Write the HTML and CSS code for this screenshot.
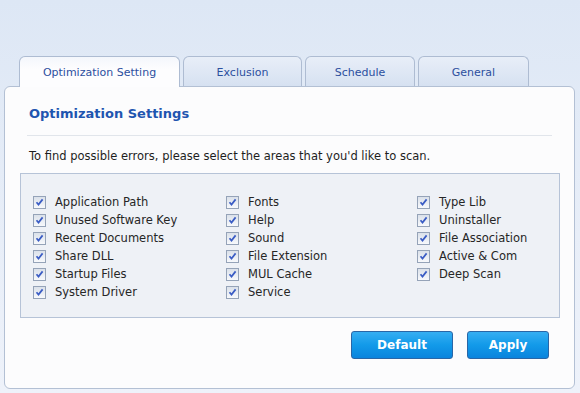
FILE: index.html
```html
<!DOCTYPE html>
<html lang="en">
<head>
    <meta charset="UTF-8">
    <title>Optimization Settings</title>
    <link rel="stylesheet" href="styles.css">
</head>
<body>
    <div class="wrap">
        <div class="tabs">
            <div class="tab active" style="width: 161px">Optimization Setting</div>
            <div class="tab" style="width: 119px">Exclusion</div>
            <div class="tab" style="width: 110px">Schedule</div>
            <div class="tab" style="width: 111px">General</div>
        </div>

        <div class="panel">
            <h2 class="title">Optimization Settings</h2>
            <div class="divider"></div>
            <p class="intro">To find possible errors, please select the areas that you'd like to scan.</p>

            <div class="areas">
                <div class="col">
                    <label class="item"><span class="box"></span>Application Path</label>
                    <label class="item"><span class="box"></span>Unused Software Key</label>
                    <label class="item"><span class="box"></span>Recent Documents</label>
                    <label class="item"><span class="box"></span>Share DLL</label>
                    <label class="item"><span class="box"></span>Startup Files</label>
                    <label class="item"><span class="box"></span>System Driver</label>
                </div>
                <div class="col">
                    <label class="item"><span class="box"></span>Fonts</label>
                    <label class="item"><span class="box"></span>Help</label>
                    <label class="item"><span class="box"></span>Sound</label>
                    <label class="item"><span class="box"></span>File Extension</label>
                    <label class="item"><span class="box"></span>MUL Cache</label>
                    <label class="item"><span class="box"></span>Service</label>
                </div>
                <div class="col">
                    <label class="item"><span class="box"></span>Type Lib</label>
                    <label class="item"><span class="box"></span>Uninstaller</label>
                    <label class="item"><span class="box"></span>File Association</label>
                    <label class="item"><span class="box"></span>Active &amp; Com</label>
                    <label class="item"><span class="box"></span>Deep Scan</label>
                </div>
            </div>

            <div class="actions">
                <button class="btn" style="width: 102px">Default</button>
                <button class="btn" style="width: 82px">Apply</button>
            </div>
        </div>
    </div>
</body>
</html>
```

FILE: styles.css
```css
body {
    margin: 0;
    font-family: 'DejaVu Sans', Verdana, sans-serif;
    font-size: 11.5px;
    background: linear-gradient(#dde7f5, #e8eef8 60%, #eef2fa);
    height: 393px;
    overflow: hidden;
}
.wrap {
    padding: 56px 5px 0 4px;
}
.tabs {
    display: flex;
    gap: 3px;
    margin-left: 15px;
    position: relative;
    z-index: 1;
}
.tab {
    box-sizing: border-box;
    height: 30px;
    line-height: 32px;
    text-align: center;
    color: #2c4f9e;
    font-size: 11px;
    border: 1px solid #aebcd2;
    border-bottom: none;
    border-radius: 6px 6px 0 0;
    background: linear-gradient(#e8eef8, #d6e1f1);
}
.tab.active {
    height: 31px;
    margin-bottom: -1px;
    background: linear-gradient(#f4f7fc, #fdfdfe 40%);
}
.panel {
    height: 301px;
    border: 1px solid #b3c0d4;
    border-radius: 6px;
    background-color: #fcfcfd;
}
.title {
    margin: 0;
    padding: 17px 0 0 24px;
    font-size: 13px;
    font-weight: bold;
    color: #1f55b0;
    line-height: 20px;
}
.divider {
    height: 1px;
    margin: 11px 22px 0 22px;
    background-color: #e1e5eb;
}
.intro {
    margin: 12px 0 0 24px;
    color: #1e1e1e;
    line-height: 16px;
}
.areas {
    display: grid;
    grid-template-columns: 193px 191px 1fr;
    margin: 9px 14px 0 15px;
    padding: 19px 0 16px 12px;
    background-color: #eef1f6;
    border: 1px solid #b6c3d7;
}
.item {
    display: flex;
    align-items: center;
    height: 18px;
    color: #262626;
}
.box {
    width: 11px;
    height: 11px;
    margin-right: 9px;
    border: 1px solid #95a3b8;
    background: url("data:image/svg+xml,%3Csvg xmlns='http://www.w3.org/2000/svg' viewBox='0 0 11 11'%3E%3Cpath d='M2.5 5.2 L4.5 7.6 L8.6 2.4' fill='none' stroke='%233a5cc4' stroke-width='1.7'/%3E%3C/svg%3E") center no-repeat, linear-gradient(#dbe1ea, #f7f9fc);
}
.actions {
    display: flex;
    justify-content: flex-end;
    gap: 14px;
    margin: 13px 25px 0 0;
}
.btn {
    height: 28px;
    border: 1px solid #2a66a6;
    border-radius: 3px;
    background: linear-gradient(#36aef2, #129ae9 50%, #0a84dd);
    color: white;
    font-family: 'DejaVu Sans', Verdana, sans-serif;
    font-size: 12px;
    font-weight: bold;
    cursor: pointer;
}
```
